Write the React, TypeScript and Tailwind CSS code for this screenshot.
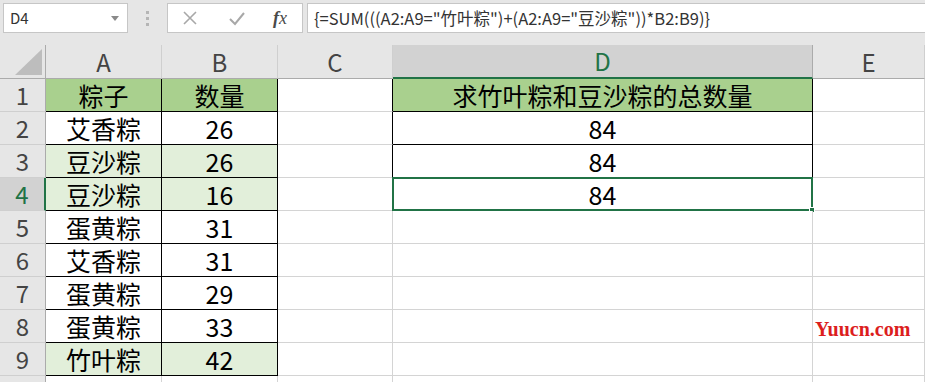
import React from 'react'

const cjk = '"Noto Sans CJK SC", "Noto Sans", sans-serif'

type Row = { name: string; qty: number; light?: boolean }

const rows: Row[] = [
  { name: '艾香粽', qty: 26 },
  { name: '豆沙粽', qty: 26, light: true },
  { name: '豆沙粽', qty: 16, light: true },
  { name: '蛋黄粽', qty: 31 },
  { name: '艾香粽', qty: 31 },
  { name: '蛋黄粽', qty: 29 },
  { name: '蛋黄粽', qty: 33 },
  { name: '竹叶粽', qty: 42, light: true },
]

function TopBar() {
  return (
    <div className="h-[45px] bg-[#e6e6e6] flex items-start pt-[3px] pl-[3px] pr-0">
      <div className="w-[125px] h-[30px] bg-white border border-[#c6c6c6] flex items-center justify-between pl-[6px] pr-[8px]">
        <span className="text-[15px] text-[#333]">D4</span>
        <svg width="8" height="5" viewBox="0 0 8 5">
          <path d="M0 0 L8 0 L4 5 Z" fill="#8a8a8a" />
        </svg>
      </div>
      <div className="w-[39px] h-[30px] flex flex-col items-center justify-center gap-[3px]">
        <div className="w-[3px] h-[3px] bg-[#b5b5b5]" />
        <div className="w-[3px] h-[3px] bg-[#b5b5b5]" />
        <div className="w-[3px] h-[3px] bg-[#b5b5b5]" />
      </div>
      <div className="w-[136px] h-[30px] bg-white border border-[#c6c6c6] flex items-center pl-[14px]">
        <svg width="16" height="16" viewBox="0 0 16 16">
          <path d="M2 2 L14 14 M14 2 L2 14" stroke="#a8a8a8" strokeWidth="1.6" fill="none" />
        </svg>
        <svg width="18" height="16" viewBox="0 0 18 16" className="ml-[30px]">
          <path d="M2 9 L7 14 L16 3" stroke="#a8a8a8" strokeWidth="2" fill="none" />
        </svg>
        <span
          className="ml-[27px] text-[18px] italic text-[#4a4a4a]"
          style={{ fontFamily: '"Liberation Serif", serif' }}
        >
          <b className="font-bold">f</b>x
        </span>
      </div>
      <div
        className="flex-1 ml-[4px] h-[30px] bg-white border-y border-l border-[#c6c6c6] flex items-center pl-[6px] text-[16.5px] text-[#333]"
        style={{ fontFamily: cjk }}
      >
        {'{=SUM(((A2:A9="竹叶粽")+(A2:A9="豆沙粽"))*B2:B9)}'}
      </div>
    </div>
  )
}

export default function App() {
  const letters = ['A', 'B', 'C', 'D', 'E']
  const black = (r: number, c: number) =>
    (r >= 1 && r <= 9 && (c === 0 || c === 1)) || (r >= 1 && r <= 4 && c === 3)

  const cellBorder = (r: number, c: number) => {
    const right = black(r, c) || (r >= 1 && r <= 4 && c === 2)
    const bottom = black(r, c)
    return `${right ? 'border-r-black' : 'border-r-[#d4d4d4]'} ${bottom ? 'border-b-black' : 'border-b-[#d4d4d4]'}`
  }

  const dataRows: { a: string; b: string; d: string; fill: string; dfill: string }[] = [
    { a: '粽子', b: '数量', d: '求竹叶粽和豆沙粽的总数量', fill: 'bg-[#a9d08e]', dfill: 'bg-[#a9d08e]' },
    ...rows.map((x, i) => ({
      a: x.name,
      b: String(x.qty),
      d: i < 3 ? '84' : '',
      fill: x.light ? 'bg-[#e2efda]' : 'bg-white',
      dfill: 'bg-white',
    })),
    { a: '', b: '', d: '', fill: 'bg-white', dfill: 'bg-white' },
  ]

  return (
    <div className="relative w-[925px] h-[382px] overflow-hidden bg-white" style={{ fontFamily: cjk }}>
      <TopBar />
      <div className="grid grid-cols-[46px_116px_116px_115px_420px_1fr]">
        {/* header row */}
        <div className="h-[34px] bg-[#e6e6e6] border-r border-b border-[#ababab] flex items-end justify-end pr-[3px] pb-[3px]">
          <svg width="27" height="26" viewBox="0 0 27 26">
            <path d="M27 0 L27 26 L0 26 Z" fill="#bdbdbd" />
          </svg>
        </div>
        {letters.map((l) => {
          const sel = l === 'D'
          return (
            <div
              key={l}
              className={`h-[34px] flex items-center justify-center text-[24px] leading-none ${
                sel
                  ? 'bg-[#d2d2d2] text-[#217346] border-b-2 border-b-[#217346] border-r border-r-[#ababab]'
                  : 'bg-[#e6e6e6] text-[#444] border-b border-b-[#ababab] border-r border-r-[#cfcfcf]'
              }`}
            >
              {l}
            </div>
          )
        })}

        {dataRows.map((row, i) => {
          const r = i + 1
          const sel = r === 4
          return (
            <React.Fragment key={r}>
              <div
                className={`h-[33px] flex items-center justify-center text-[24px] leading-none border-b border-b-[#cfcfcf] ${
                  sel
                    ? 'bg-[#d2d2d2] text-[#217346] border-r-2 border-r-[#217346]'
                    : 'bg-[#e6e6e6] text-[#444] border-r border-r-[#ababab]'
                }`}
              >
                {r < 10 ? r : ''}
              </div>
              <div className={`h-[33px] border-r border-b ${cellBorder(r, 0)} ${row.fill} flex items-center justify-center text-[25px] text-black leading-none`}>
                {row.a}
              </div>
              <div className={`h-[33px] border-r border-b ${cellBorder(r, 1)} ${row.fill} flex items-center justify-center text-[25px] text-black leading-none`}>
                {row.b}
              </div>
              <div className={`h-[33px] border-r border-b ${cellBorder(r, 2)} bg-white`} />
              <div className={`relative h-[33px] border-r border-b ${cellBorder(r, 3)} ${r <= 4 ? row.dfill : 'bg-white'} flex items-center justify-center text-[25px] text-black leading-none`}>
                {row.d}
                {sel && (
                  <div className="absolute -left-[1px] -top-[1px] -right-[1px] -bottom-[1px] border-2 border-[#217346]">
                    <div className="absolute -right-[4px] -bottom-[4px] w-[6px] h-[6px] bg-[#217346] border border-white" />
                  </div>
                )}
              </div>
              <div className="h-[33px] border-r border-b border-r-[#d4d4d4] border-b-[#d4d4d4] bg-white" />
            </React.Fragment>
          )
        })}
      </div>
      <div
        className="absolute left-[815px] top-[314px] text-[20px] font-bold text-[#dc1e1e]"
        style={{ fontFamily: '"Liberation Serif", serif' }}
      >
        Yuucn.com
      </div>
    </div>
  )
}
